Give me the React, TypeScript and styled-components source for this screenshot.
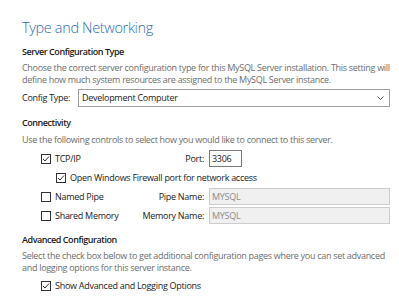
import React from 'react';
import styled, { createGlobalStyle } from 'styled-components';

const GlobalStyle = createGlobalStyle`
  html, body {
    margin: 0;
    padding: 0;
    background: #ffffff;
  }
  body {
    font-family: "Open Sans", "Noto Sans", sans-serif;
    font-size: 9px;
    line-height: 12px;
    letter-spacing: -0.28px;
    color: #1a1a1a;
  }
`;

const Page = styled.div`
  width: 399px;
  height: 301px;
  box-sizing: border-box;
  padding: 19px 5px 0 22px;
  overflow: hidden;
`;

const Title = styled.h1`
  margin: 0;
  font-size: 14.5px;
  font-weight: 300;
  line-height: 18px;
  letter-spacing: -0.35px;
  color: #2d6fb7;
`;

const SectionTitle = styled.div<{ $top: number }>`
  margin-top: ${(p) => p.$top}px;
  font-weight: 600;
  letter-spacing: -0.45px;
`;

const Description = styled.p<{ $top: number }>`
  margin: ${(p) => p.$top}px 0 0;
  color: #6d6d6d;
  letter-spacing: -0.3px;
`;

const ConfigRow = styled.div`
  display: flex;
  align-items: center;
  margin: 3px 4px 0 0;
`;

const ConfigLabel = styled.label`
  width: 56px;
  flex-shrink: 0;
  white-space: nowrap;
`;

const Select = styled.div`
  flex: 1;
  height: 18px;
  box-sizing: border-box;
  border: 1px solid #a0a0a0;
  display: flex;
  align-items: center;
  justify-content: space-between;
  padding: 0 5px 0 3px;
`;

const Grid = styled.div`
  display: grid;
  grid-template-columns: 15px 1fr auto 181px;
  grid-auto-rows: 17px;
  row-gap: 2px;
  align-items: center;
  margin: 4px 4px 0 19px;
`;

const CheckCell = styled.div<{ $col: string }>`
  grid-column: ${(p) => p.$col};
  display: flex;
  align-items: center;
  gap: 4px;
  white-space: nowrap;
`;

const RightLabel = styled.div`
  text-align: right;
  padding-right: 5px;
  white-space: nowrap;
`;

const TextInput = styled.div<{ $disabled?: boolean; $width?: number }>`
  height: 17px;
  box-sizing: border-box;
  width: ${(p) => (p.$width ? `${p.$width}px` : 'auto')};
  border: 1px solid ${(p) => (p.$disabled ? '#cccccc' : '#7a7a7a')};
  background: ${(p) => (p.$disabled ? '#f0f0f0' : '#ffffff')};
  color: ${(p) => (p.$disabled ? '#8d8d8d' : '#1a1a1a')};
  display: flex;
  align-items: center;
  padding: 0 2px;
`;

const Box = styled.span`
  width: 10px;
  height: 10px;
  box-sizing: border-box;
  border: 1px solid #333333;
  background: #ffffff;
  display: inline-flex;
  align-items: center;
  justify-content: center;
  flex-shrink: 0;
`;

const Check = ({ checked }: { checked?: boolean }) => (
  <Box>
    {checked && (
      <svg width="8" height="8" viewBox="0 0 8 8">
        <path d="M1 4 L3 6 L7 1.5" fill="none" stroke="#333333" strokeWidth="1" />
      </svg>
    )}
  </Box>
);

const AdvancedRow = styled.div`
  display: flex;
  align-items: center;
  gap: 4px;
  height: 17px;
  margin: 3px 0 0 19px;
`;

const Chevron = () => (
  <svg width="7" height="4" viewBox="0 0 7 4">
    <path d="M0.5 0.5 L3.5 3.5 L6.5 0.5" fill="none" stroke="#555555" strokeWidth="1" />
  </svg>
);

const App = () => {
  return (
    <Page>
      <GlobalStyle />
      <Title>Type and Networking</Title>
      <SectionTitle $top={9}>Server Configuration Type</SectionTitle>
      <Description $top={4}>
        Choose the correct server configuration type for this MySQL Server installation. This setting will
        define how much system resources are assigned to the MySQL Server instance.
      </Description>
      <ConfigRow>
        <ConfigLabel>Config Type:</ConfigLabel>
        <Select>
          <span>Development Computer</span>
          <Chevron />
        </Select>
      </ConfigRow>
      <SectionTitle $top={10}>Connectivity</SectionTitle>
      <Description $top={5}>
        Use the following controls to select how you would like to connect to this server.
      </Description>
      <Grid>
        <CheckCell $col="1 / 3">
          <Check checked />
          TCP/IP
        </CheckCell>
        <RightLabel>Port:</RightLabel>
        <TextInput $width={33}>3306</TextInput>
        <CheckCell $col="2 / 5">
          <Check checked />
          Open Windows Firewall port for network access
        </CheckCell>
        <CheckCell $col="1 / 3">
          <Check />
          Named Pipe
        </CheckCell>
        <RightLabel>Pipe Name:</RightLabel>
        <TextInput $disabled>MYSQL</TextInput>
        <CheckCell $col="1 / 3">
          <Check />
          Shared Memory
        </CheckCell>
        <RightLabel>Memory Name:</RightLabel>
        <TextInput $disabled>MYSQL</TextInput>
      </Grid>
      <SectionTitle $top={10}>Advanced Configuration</SectionTitle>
      <Description $top={4}>
        Select the check box below to get additional configuration pages where you can set advanced
        and logging options for this server instance.
      </Description>
      <AdvancedRow>
        <Check checked />
        Show Advanced and Logging Options
      </AdvancedRow>
    </Page>
  );
};

export default App;
